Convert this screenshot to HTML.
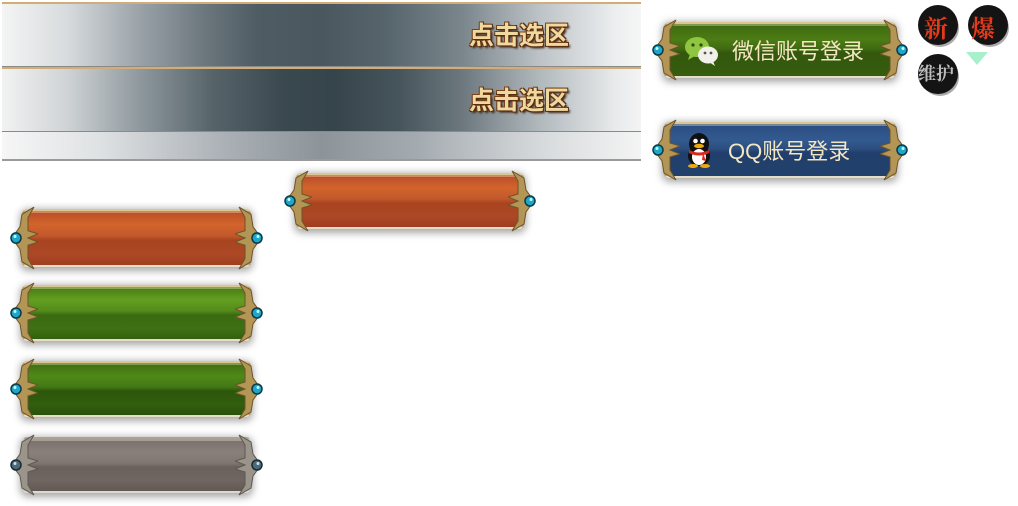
<!DOCTYPE html>
<html><head><meta charset="utf-8"><style>
body{margin:0;width:1018px;height:506px;background:#fff;position:relative;overflow:hidden;font-family:"Liberation Sans","Noto Sans CJK SC",sans-serif}
.ban{position:absolute;left:2px;width:639px}
.ban .t{position:absolute;right:72px;top:12px;font-size:25px;font-weight:bold;color:#f0d9a0;text-shadow:1px 1px 0 #5a2e10,-1px -1px 0 #7a4418,1px -1px 0 #5a2e10,-1px 1px 0 #5a2e10,2px 2px 2px #3a1a08;letter-spacing:0px}
.b{position:absolute}
.b .sh{position:absolute;left:14px;right:14px;top:3px;bottom:3px;box-shadow:0 2px 8px 2px rgba(0,0,0,.35);border-radius:6px}
.b .f{position:absolute;left:14px;right:14px;top:3px;bottom:3px;border:2px solid #b89e62;border-top-color:#d9c692;border-bottom-color:#e6ddc6;border-radius:5px;overflow:hidden}
.b .f:after{content:"";position:absolute;left:0;right:0;top:0;height:2px;background:rgba(255,240,200,.35)}
.b svg{position:absolute;top:0;width:30px;height:100%}
.b .l{left:0}.b .r{right:0;transform:scaleX(-1)}
.or .f{background:linear-gradient(#b84c26,#d2642c 25%,#c2582c 46%,#a8441f 54%,#ad4826 80%,#9e3e20)}
.gr .f{background:linear-gradient(#4a7a14,#62a020 25%,#548a1a 46%,#3a6a10 54%,#3e7014 80%,#33600e)}
.gr2 .f{background:linear-gradient(#3f6c10,#4f8a18 25%,#447814 46%,#2c560a 54%,#325e0e 80%,#2a520a)}
.gy .f{background:linear-gradient(#7a706c,#8a807a 25%,#817772 46%,#6a605c 54%,#6f6561 80%,#625955)}
.wx .f{background:linear-gradient(#3f6a10,#4c7c14 30%,#3f6a12 48%,#33580e 55%,#365c0e)}
.qq .f{background:linear-gradient(#2a4c80,#335a90 30%,#2c4e80 48%,#213f6c 55%,#22406c)}
.gy .f{border-color:#a8a29a #cfcac2 #ddd8d0}
.lb{position:absolute;color:#f4e6c0;font-size:22px;top:15px;left:82px}
</style></head><body>

<div class="ban" style="top:2px;height:62px;background:linear-gradient(90deg,#f4f4f4 0%,#d8dcde 10%,#98a0a6 22%,#6a767c 32%,#4e5c63 40%,#4a575e 50%,#56646b 60%,#7a868c 72%,#bcc2c6 84%,#eceeef 96%,#f6f6f6 100%);border-top:2px solid #d2ad78;border-bottom:2px solid #8a8a8a"><div class="t">点击选区</div></div>
<div class="ban" style="top:67px;height:62px;background:linear-gradient(90deg,#f2f2f2 0%,#d0d4d6 10%,#8c969c 22%,#56646a 33%,#3a484f 44%,#36444b 52%,#46545b 62%,#6c787e 72%,#b0b8bc 84%,#e8eaeb 96%,#f4f4f4 100%);border-top:2px solid #d2ad78;border-bottom:2px solid #8a8a8a"><div class="t">点击选区</div></div>
<div class="ban" style="top:132px;height:27px;background:linear-gradient(90deg,#f6f6f6 0%,#dfe2e4 15%,#aab0b5 35%,#8c949a 50%,#a4abb0 65%,#d8dbdd 85%,#f4f4f4 100%);border-bottom:2px solid #9a9a9a"></div>

<div class="b or" style="left:282px;top:170px;width:256px;height:62px"><div class="sh"></div><div class="f"></div>
<svg class="l" viewBox="0 0 30 62" preserveAspectRatio="none"><path d="M4 31 L12 20 L14 8 L26 1 L20 11 L20 24 L30 27 L20 31 L30 35 L20 38 L20 51 L26 61 L14 54 L12 42 Z" fill="#b39556" stroke="#6e5428"/><circle cx="8" cy="31" r="5" fill="#1fa6c8" stroke="#0a3a4a" stroke-width="1.5"/><circle cx="7" cy="29.5" r="1.5" fill="#bff"/></svg>
<svg class="r" viewBox="0 0 30 62" preserveAspectRatio="none"><path d="M4 31 L12 20 L14 8 L26 1 L20 11 L20 24 L30 27 L20 31 L30 35 L20 38 L20 51 L26 61 L14 54 L12 42 Z" fill="#b39556" stroke="#6e5428"/><circle cx="8" cy="31" r="5" fill="#1fa6c8" stroke="#0a3a4a" stroke-width="1.5"/><circle cx="7" cy="29.5" r="1.5" fill="#bff"/></svg></div>

<div class="b or" style="left:8px;top:206px;width:257px;height:64px"><div class="sh"></div><div class="f"></div>
<svg class="l" viewBox="0 0 30 62" preserveAspectRatio="none"><path d="M4 31 L12 20 L14 8 L26 1 L20 11 L20 24 L30 27 L20 31 L30 35 L20 38 L20 51 L26 61 L14 54 L12 42 Z" fill="#b39556" stroke="#6e5428"/><circle cx="8" cy="31" r="5" fill="#1fa6c8" stroke="#0a3a4a" stroke-width="1.5"/><circle cx="7" cy="29.5" r="1.5" fill="#bff"/></svg>
<svg class="r" viewBox="0 0 30 62" preserveAspectRatio="none"><path d="M4 31 L12 20 L14 8 L26 1 L20 11 L20 24 L30 27 L20 31 L30 35 L20 38 L20 51 L26 61 L14 54 L12 42 Z" fill="#b39556" stroke="#6e5428"/><circle cx="8" cy="31" r="5" fill="#1fa6c8" stroke="#0a3a4a" stroke-width="1.5"/><circle cx="7" cy="29.5" r="1.5" fill="#bff"/></svg></div>

<div class="b gr" style="left:8px;top:282px;width:257px;height:62px"><div class="sh"></div><div class="f"></div>
<svg class="l" viewBox="0 0 30 62" preserveAspectRatio="none"><path d="M4 31 L12 20 L14 8 L26 1 L20 11 L20 24 L30 27 L20 31 L30 35 L20 38 L20 51 L26 61 L14 54 L12 42 Z" fill="#b39556" stroke="#6e5428"/><circle cx="8" cy="31" r="5" fill="#1fa6c8" stroke="#0a3a4a" stroke-width="1.5"/><circle cx="7" cy="29.5" r="1.5" fill="#bff"/></svg>
<svg class="r" viewBox="0 0 30 62" preserveAspectRatio="none"><path d="M4 31 L12 20 L14 8 L26 1 L20 11 L20 24 L30 27 L20 31 L30 35 L20 38 L20 51 L26 61 L14 54 L12 42 Z" fill="#b39556" stroke="#6e5428"/><circle cx="8" cy="31" r="5" fill="#1fa6c8" stroke="#0a3a4a" stroke-width="1.5"/><circle cx="7" cy="29.5" r="1.5" fill="#bff"/></svg></div>

<div class="b gr2" style="left:8px;top:358px;width:257px;height:62px"><div class="sh"></div><div class="f"></div>
<svg class="l" viewBox="0 0 30 62" preserveAspectRatio="none"><path d="M4 31 L12 20 L14 8 L26 1 L20 11 L20 24 L30 27 L20 31 L30 35 L20 38 L20 51 L26 61 L14 54 L12 42 Z" fill="#b39556" stroke="#6e5428"/><circle cx="8" cy="31" r="5" fill="#1fa6c8" stroke="#0a3a4a" stroke-width="1.5"/><circle cx="7" cy="29.5" r="1.5" fill="#bff"/></svg>
<svg class="r" viewBox="0 0 30 62" preserveAspectRatio="none"><path d="M4 31 L12 20 L14 8 L26 1 L20 11 L20 24 L30 27 L20 31 L30 35 L20 38 L20 51 L26 61 L14 54 L12 42 Z" fill="#b39556" stroke="#6e5428"/><circle cx="8" cy="31" r="5" fill="#1fa6c8" stroke="#0a3a4a" stroke-width="1.5"/><circle cx="7" cy="29.5" r="1.5" fill="#bff"/></svg></div>

<div class="b gy" style="left:8px;top:434px;width:257px;height:62px"><div class="sh"></div><div class="f"></div>
<svg class="l" viewBox="0 0 30 62" preserveAspectRatio="none"><path d="M4 31 L12 20 L14 8 L26 1 L20 11 L20 24 L30 27 L20 31 L30 35 L20 38 L20 51 L26 61 L14 54 L12 42 Z" fill="#9a948a" stroke="#5e5850"/><circle cx="8" cy="31" r="5" fill="#4a6a7a" stroke="#1a2a30" stroke-width="1.5"/><circle cx="7" cy="29.5" r="1.5" fill="#cde"/></svg>
<svg class="r" viewBox="0 0 30 62" preserveAspectRatio="none"><path d="M4 31 L12 20 L14 8 L26 1 L20 11 L20 24 L30 27 L20 31 L30 35 L20 38 L20 51 L26 61 L14 54 L12 42 Z" fill="#9a948a" stroke="#5e5850"/><circle cx="8" cy="31" r="5" fill="#4a6a7a" stroke="#1a2a30" stroke-width="1.5"/><circle cx="7" cy="29.5" r="1.5" fill="#cde"/></svg></div>

<div class="b wx" style="left:650px;top:19px;width:260px;height:62px"><div class="sh"></div><div class="f"></div>
<svg class="l" viewBox="0 0 30 62" preserveAspectRatio="none"><path d="M4 31 L12 20 L14 8 L26 1 L20 11 L20 24 L30 27 L20 31 L30 35 L20 38 L20 51 L26 61 L14 54 L12 42 Z" fill="#b39556" stroke="#6e5428"/><circle cx="8" cy="31" r="5" fill="#1fa6c8" stroke="#0a3a4a" stroke-width="1.5"/><circle cx="7" cy="29.5" r="1.5" fill="#bff"/></svg>
<svg class="r" viewBox="0 0 30 62" preserveAspectRatio="none"><path d="M4 31 L12 20 L14 8 L26 1 L20 11 L20 24 L30 27 L20 31 L30 35 L20 38 L20 51 L26 61 L14 54 L12 42 Z" fill="#b39556" stroke="#6e5428"/><circle cx="8" cy="31" r="5" fill="#1fa6c8" stroke="#0a3a4a" stroke-width="1.5"/><circle cx="7" cy="29.5" r="1.5" fill="#bff"/></svg>
<svg style="left:34px;top:16px;width:36px;height:32px" viewBox="0 0 36 32"><ellipse cx="13" cy="12" rx="12" ry="10" fill="#8ec63f"/><path d="M6 19 L4 25 L11 21Z" fill="#8ec63f"/><circle cx="9" cy="10" r="1.6" fill="#2c4a10"/><circle cx="17" cy="10" r="1.6" fill="#2c4a10"/><ellipse cx="24" cy="20" rx="10" ry="8.5" fill="#f2f0ea"/><path d="M29 26 L31 31 L25 27Z" fill="#f2f0ea"/><circle cx="21" cy="18" r="1.4" fill="#555"/><circle cx="27" cy="18" r="1.4" fill="#555"/></svg>
<div class="lb">微信账号登录</div></div>

<div class="b qq" style="left:650px;top:119px;width:260px;height:62px"><div class="sh"></div><div class="f"></div>
<svg class="l" viewBox="0 0 30 62" preserveAspectRatio="none"><path d="M4 31 L12 20 L14 8 L26 1 L20 11 L20 24 L30 27 L20 31 L30 35 L20 38 L20 51 L26 61 L14 54 L12 42 Z" fill="#b39556" stroke="#6e5428"/><circle cx="8" cy="31" r="5" fill="#1fa6c8" stroke="#0a3a4a" stroke-width="1.5"/><circle cx="7" cy="29.5" r="1.5" fill="#bff"/></svg>
<svg class="r" viewBox="0 0 30 62" preserveAspectRatio="none"><path d="M4 31 L12 20 L14 8 L26 1 L20 11 L20 24 L30 27 L20 31 L30 35 L20 38 L20 51 L26 61 L14 54 L12 42 Z" fill="#b39556" stroke="#6e5428"/><circle cx="8" cy="31" r="5" fill="#1fa6c8" stroke="#0a3a4a" stroke-width="1.5"/><circle cx="7" cy="29.5" r="1.5" fill="#bff"/></svg>
<svg style="left:34px;top:12px;width:30px;height:38px" viewBox="0 0 30 38"><ellipse cx="15" cy="13" rx="10" ry="11" fill="#111"/><ellipse cx="15" cy="25" rx="11" ry="10" fill="#111"/><ellipse cx="15" cy="26" rx="7" ry="8" fill="#fff"/><circle cx="11.5" cy="10" r="2.3" fill="#fff"/><circle cx="18.5" cy="10" r="2.3" fill="#fff"/><ellipse cx="15" cy="15" rx="5" ry="2.2" fill="#f0a810"/><path d="M5 19 Q15 24 25 19 L25 22 Q15 27 5 22Z" fill="#e0261a"/><path d="M19 22 L22 30 L18 29Z" fill="#e0261a"/><ellipse cx="9" cy="35" rx="5" ry="2" fill="#f0a810"/><ellipse cx="21" cy="35" rx="5" ry="2" fill="#f0a810"/></svg>
<div class="lb" style="left:78px">QQ账号登录</div></div>

<div style="position:absolute;left:918px;top:5px;width:40px;height:40px;border-radius:50%;background:#141414;box-shadow:2px 3px 0 -1px #aaa"><span style="position:absolute;left:6px;top:4px;font:bold 24px 'Noto Serif CJK SC',serif;color:#e23a1a">新</span></div>
<div style="position:absolute;left:968px;top:5px;width:40px;height:40px;border-radius:50%;background:#141414;box-shadow:2px 3px 0 -1px #aaa"><span style="position:absolute;left:3px;top:4px;font:bold 24px 'Noto Serif CJK SC',serif;color:#e23a1a">爆</span></div>
<div style="position:absolute;left:918px;top:54px;width:40px;height:40px;border-radius:50%;background:#141414;box-shadow:2px 3px 0 -1px #aaa"><span style="position:absolute;left:0px;top:6px;font:bold 18px 'Noto Serif CJK SC',serif;color:#bbb">维护</span></div>
<div style="position:absolute;left:966px;top:52px;width:0;height:0;border-left:11px solid transparent;border-right:11px solid transparent;border-top:13px solid #a8f0cc"></div>
</body></html>
